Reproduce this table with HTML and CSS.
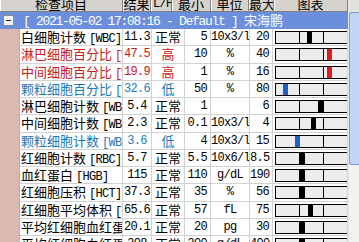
FILE: index.html
```html
<!DOCTYPE html>
<html lang="zh">

<head>
    <meta charset="UTF-8">
    <title>检验结果</title>
    <link rel="stylesheet" href="styles.css">
</head>

<body>
    <div class="frame">
        <div class="grid">
            <div class="head">
                <div class="hcell">检查项目</div>
                <div class="hcell">结果</div>
                <div class="hcell mono">L/H/N</div>
                <div class="hcell">最小</div>
                <div class="hcell">单位</div>
                <div class="hcell">最大</div>
                <div class="hcell">图表</div>
            </div>
            <div class="group">
                <span class="toggle"></span>
                <span class="group-title mono">[ 2021-05-02 17:08:16 - Default ] <span class="cjk">宋海鹏</span></span>
            </div>
            <div id="rows"></div>
        </div>
        <div class="scrollbar">
            <div class="scroll-top"></div>
            <div class="thumb"></div>
        </div>
    </div>

    <script>
        const results = [
            { name: '白细胞计数', code: '[WBC]', value: '11.3', min: '5', unit: '10x3/l', max: '20' },
            { name: '淋巴细胞百分比', code: '[WBC%]', value: '47.5', min: '10', unit: '%', max: '40' },
            { name: '中间细胞百分比', code: '[WBC%]', value: '19.9', min: '1', unit: '%', max: '16' },
            { name: '颗粒细胞百分比', code: '[WBC%]', value: '32.6', min: '50', unit: '%', max: '80' },
            { name: '淋巴细胞计数', code: '[WBC#]', value: '5.4', min: '1', unit: '', max: '6' },
            { name: '中间细胞计数', code: '[WBC#]', value: '2.3', min: '0.1', unit: '10x3/l', max: '4' },
            { name: '颗粒细胞计数', code: '[WBC#]', value: '3.6', min: '4', unit: '10x3/l', max: '15' },
            { name: '红细胞计数', code: '[RBC]', value: '5.7', min: '5.5', unit: '10x6/l', max: '8.5' },
            { name: '血红蛋白', code: '[HGB]', value: '115', min: '110', unit: 'g/dL', max: '190' },
            { name: '红细胞压积', code: '[HCT]', value: '37.3', min: '35', unit: '%', max: '56' },
            { name: '红细胞平均体积', code: '[MCV]', value: '65.6', min: '57', unit: 'fL', max: '75' },
            { name: '平均红细胞血红蛋白', code: '[MCH]', value: '20.1', min: '20', unit: 'pg', max: '30' },
            { name: '平均红细胞血红蛋白浓度', code: '[MCHC]', value: '308', min: '300', unit: 'g/dL', max: '400' }
        ];

        const BOX = 71; // inner width of the chart box
        const BAR = 5;

        function flag(r) {
            const v = parseFloat(r.value);
            if (v > parseFloat(r.max)) return 'high';
            if (v < parseFloat(r.min)) return 'low';
            return 'normal';
        }

        // chart: low | normal range | high, each segment one range wide
        function markerLeft(r, f) {
            const v = parseFloat(r.value);
            const min = parseFloat(r.min);
            const max = parseFloat(r.max);
            const range = max - min;
            let left = (v - (min - range)) / (range * 3) * BOX - BAR / 2;
            const seg = BOX / 3;
            const bounds = { low: [0, seg - BAR], normal: [seg, seg * 2 - BAR], high: [seg * 2, BOX - BAR] }[f];
            left = Math.min(Math.max(left, bounds[0]), bounds[1]);
            return Math.round(left);
        }

        const labels = { normal: '正常', high: '高', low: '低' };

        document.getElementById('rows').innerHTML = results.map(r => {
            const f = flag(r);
            return `
                <div class="row ${f}">
                    <div class="cell side"></div>
                    <div class="cell name">${r.name} <span class="mono">${r.code}</span></div>
                    <div class="cell value mono flagged">${r.value}</div>
                    <div class="cell lhn flagged">${labels[f]}</div>
                    <div class="cell num mono">${r.min}</div>
                    <div class="cell unit mono">${r.unit}</div>
                    <div class="cell num mono">${r.max}</div>
                    <div class="cell chart">
                        <div class="chart-box">
                            <span></span><span></span><span></span>
                            <i class="marker" style="left: ${markerLeft(r, f)}px"></i>
                        </div>
                    </div>
                </div>`;
        }).join('');
    </script>
</body>

</html>
```

FILE: styles.css
```css
:root {
    --head-bg: #d6d3ce;
    --group-bg: #6b8fdc;
    --side-bg: #dbb8b0;
    --grid-line: #d2d2d2;
    --red: #c82020;
    --blue: #1d7ab6;
}

body {
    margin: 0;
    background: #ffffff;
    font-family: "Noto Sans CJK SC", sans-serif;
    font-size: 13px;
    color: #000000;
    overflow: hidden;
}

.mono {
    font-family: "Liberation Mono", "Noto Sans CJK SC", monospace;
    font-size: 12px;
    letter-spacing: -0.7px;
}

.cjk {
    font-family: "Noto Sans CJK SC", sans-serif;
    font-size: 13px;
    letter-spacing: 0;
}

.frame {
    display: flex;
    width: 359px;
    height: 242px;
    overflow: hidden;
}

.grid {
    width: 348px;
    flex-shrink: 0;
}

/* header */
.head {
    display: grid;
    grid-template-columns: 123px 28px 21px 39px 38px 25px 74px;
    height: 12px;
    background: var(--head-bg);
    border-bottom: 1px solid #808080;
    box-sizing: border-box;
}

.hcell {
    border-right: 1px solid #808080;
    box-shadow: inset 1px 0 0 #ffffff;
    text-align: center;
    line-height: 8px;
    white-space: nowrap;
    overflow: hidden;
}

.hcell.mono {
    line-height: 9px;
    text-align: left;
    padding-left: 2px;
}

/* group line */
.group {
    display: flex;
    align-items: center;
    height: 17px;
    background: var(--group-bg);
    color: #ffffff;
    white-space: nowrap;
}

.toggle {
    position: relative;
    width: 9px;
    height: 9px;
    margin: 0 9px 0 3px;
    background: #f2f2f2;
    border: 1px solid #8c8c8c;
}

.toggle::after {
    content: '';
    position: absolute;
    left: 2px;
    top: 4px;
    width: 5px;
    height: 1px;
    background: #202020;
}

.group-title {
    font-size: 13px;
    letter-spacing: -1.3px;
    line-height: 16px;
}

/* data rows */
.row {
    display: grid;
    grid-template-columns: 20px 103px 29px 33px 26px 39px 23px 75px;
    height: 17.25px;
}

.cell {
    border-right: 1px solid var(--grid-line);
    border-bottom: 1px solid var(--grid-line);
    white-space: nowrap;
    overflow: hidden;
    line-height: 16px;
}

.cell.side {
    background: var(--side-bg);
    border-bottom: none;
    border-right-color: #c9a8a0;
}

.name {
    padding-left: 1px;
}

.value,
.unit {
    text-align: center;
}

.lhn {
    text-align: center;
}

.num {
    text-align: right;
    padding-right: 3px;
}

.row.high .name,
.row.high .flagged {
    color: var(--red);
}

.row.low .name,
.row.low .flagged {
    color: var(--blue);
}

/* range chart */
.chart {
    padding: 2px 0 0 2px;
}

.chart-box {
    position: relative;
    display: grid;
    grid-template-columns: 23px 24px 24px;
    width: 73px;
    height: 13px;
    box-sizing: border-box;
    border: 1px solid #000000;
    background: #ececec;
}

.chart-box span:nth-child(2),
.chart-box span:nth-child(3) {
    border-left: 1px solid #000000;
}

.marker {
    position: absolute;
    top: 0;
    bottom: 0;
    width: 5px;
    background: #000000;
}

.row.high .marker {
    background: #e01c1c;
}

.row.low .marker {
    background: #1f62c6;
}

/* scrollbar */
.scrollbar {
    flex: 1;
    display: flex;
    flex-direction: column;
    background: #f3f2ee;
    border-left: 1px solid #e8e8e8;
}

.scroll-top {
    height: 12px;
    background: #e4e2dc;
}

.thumb {
    height: 151px;
    background: #c4d6f8;
    border: 1px solid #7d9fe6;
    border-right: none;
    border-radius: 3px 0 0 3px;
}
```
